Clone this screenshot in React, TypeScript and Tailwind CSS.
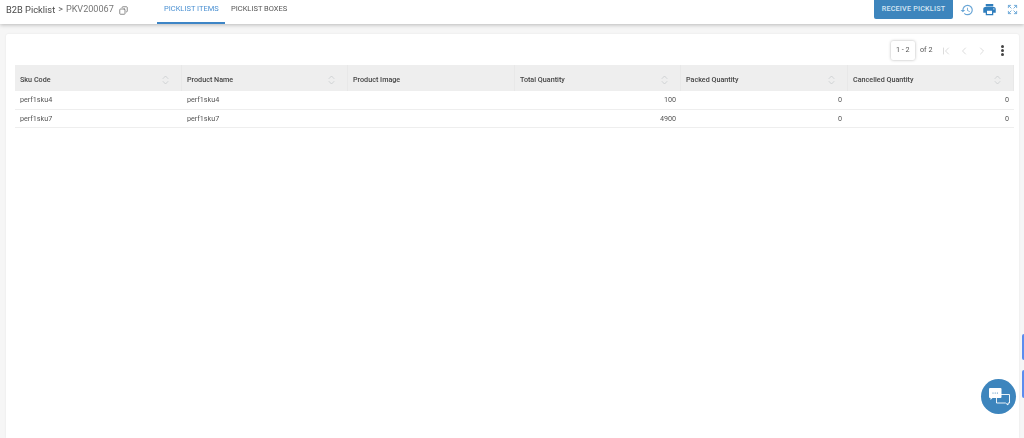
import React from 'react';
import { Copy, ChevronFirst, ChevronLeft, ChevronRight, Expand } from 'lucide-react';
import { MdHistory, MdPrint } from 'react-icons/md';

const columns = [
    { label: 'Sku Code', sortable: true },
    { label: 'Product Name', sortable: true },
    { label: 'Product Image', sortable: false },
    { label: 'Total Quantity', sortable: true },
    { label: 'Packed Quantity', sortable: true },
    { label: 'Cancelled Quantity', sortable: true },
];

const rows = [
    ['perf1sku4', 'perf1sku4', '', '100', '0', '0'],
    ['perf1sku7', 'perf1sku7', '', '4900', '0', '0'],
];

const SortIcon: React.FC = () => (
    <svg width="7" height="10" viewBox="0 0 7 10" fill="none" stroke="#c8cbce" strokeWidth="0.8">
        <path d="M0.8 3.8 L3.5 1 L6.2 3.8" />
        <path d="M0.8 6.2 L3.5 9 L6.2 6.2" />
    </svg>
);

const ChatIcon: React.FC = () => (
    <svg width="21" height="18" viewBox="0 0 21 18" className="ml-[1px]">
        <path d="M7.5 6.5h13v8.500h-1.500v2l-2.500-2H7.500z" fill="none" stroke="#fff" strokeWidth="0.9" />
        <path d="M1 0h10.500a1 1 0 0 1 1 1v8a1 1 0 0 1-1 1H3.500L1.500 12v-2H1a1 1 0 0 1-1-1V1a1 1 0 0 1 1-1z" fill="#fff" />
        <circle cx="4" cy="5" r="0.6" fill="#3d85bd" />
        <circle cx="6.200" cy="5" r="0.6" fill="#3d85bd" />
        <circle cx="8.400" cy="5" r="0.6" fill="#3d85bd" />
    </svg>
);

export default function App() {
    return (
        <div className="relative h-[438px] w-[1024px] overflow-hidden bg-[#f6f6f6] font-['Roboto',sans-serif]">
            <header className="flex h-[24px] items-start bg-white pl-[6px] pr-[6px] shadow-[0_1px_4px_rgba(0,0,0,0.25)]">
                <div className="flex h-[19px] w-[151px] items-center leading-none will-change-transform">
                    <span className="text-[9.300px] text-[#4a4a4a]">B2B Picklist</span>
                    <span className="mx-[3px] text-[9px] text-[#666]">&gt;</span>
                    <span className="text-[9.100px] text-[#777]">PKV200067</span>
                    <Copy className="ml-[5px] mt-[1px] h-[9px] w-[9px] -scale-x-100 text-[#666]" />
                </div>
                <div className="flex h-full text-[7.500px] leading-none">
                    <div className="flex h-full w-[68px] items-center justify-center border-b-2 border-[#3d85c6] pb-[4px] text-[#4a90d2]">
                        <span className="will-change-transform">PICKLIST ITEMS</span>
                    </div>
                    <div className="flex h-full w-[68px] items-center justify-center whitespace-nowrap border-b-2 border-transparent pb-[4px] text-[#555]">
                        <span className="will-change-transform">PICKLIST BOXES</span>
                    </div>
                </div>
                <div className="ml-auto flex items-center">
                    <button className="h-[19px] w-[79px] rounded-b-[2px] bg-[#3d85bd] text-[7.200px] font-medium tracking-[0.2px] text-[#d5e5f2]">RECEIVE PICKLIST</button>
                    <MdHistory className="ml-[7px] h-[14px] w-[14px] text-[#6aa6d6]" />
                    <MdPrint className="ml-[8px] h-[15px] w-[15px] text-[#2f7ebd]" />
                    <Expand className="ml-[10px] h-[11px] w-[11px] text-[#6aa6d6]" />
                </div>
            </header>

            <main className="ml-[6px] mr-[5px] mt-[10px] h-[404px] rounded-t-[2px] bg-white pl-[9px] pr-[5px] shadow-[0_0_2px_rgba(0,0,0,0.08)]">
                <div className="flex h-[31px] items-center justify-end pr-[10px] pt-[2px]">
                    <div className="flex h-[19px] w-[24px] items-center justify-center rounded-[2px] bg-white text-[7.200px] text-[#555] shadow-[0_0_3px_rgba(0,0,0,0.3)]">
                        <span className="will-change-transform">1 - 2</span>
                    </div>
                    <span className="ml-[5px] text-[7.200px] text-[#555] will-change-transform">of 2</span>
                    <ChevronFirst className="ml-[8px] h-[12px] w-[12px] text-[#dcdcdc]" />
                    <ChevronLeft className="ml-[6px] h-[12px] w-[12px] text-[#dcdcdc]" />
                    <ChevronRight className="ml-[6px] h-[12px] w-[12px] text-[#dcdcdc]" />
                    <div className="ml-[13px] flex w-[3px] flex-col gap-[1.500px]">
                        <span className="h-[2.500px] w-[2.500px] rounded-full bg-[#444]" />
                        <span className="h-[2.500px] w-[2.500px] rounded-full bg-[#444]" />
                        <span className="h-[2.500px] w-[2.500px] rounded-full bg-[#444]" />
                    </div>
                </div>

                <div className="grid grid-cols-6 text-[7.200px]">
                    {columns.map(col => (
                        <div key={col.label} className="flex h-[26px] items-center justify-between border-r border-[#e8e8e8] bg-[#eeeeee] pl-[5px] pr-[12px] pt-[4px] font-medium text-[#444] last:border-r-0">
                            <span className="will-change-transform">{col.label}</span>
                            {col.sortable && <SortIcon />}
                        </div>
                    ))}
                    {rows.map((row, i) =>
                        row.map((cell, j) => (
                            <div key={`${i}-${j}`} className={`flex h-[18.500px] items-center border-b border-[#eeeeee] px-[5px] text-[#555] ${i === 1 ? 'pt-[1.500px]' : 'pt-[0.5px]'} ${j > 2 ? 'justify-end' : ''}`}>
                                <span className="will-change-transform">{cell}</span>
                            </div>
                        ))
                    )}
                </div>
            </main>

            <div className="absolute right-0 top-[334px] h-[26px] w-[2px] rounded-l-[2px] bg-[#5b8def]" />
            <div className="absolute right-0 top-[370px] h-[28px] w-[2px] rounded-l-[2px] bg-[#5b8def]" />
            <button className="absolute left-[981px] top-[379px] flex h-[35px] w-[35px] items-center justify-center rounded-full bg-[#3d85bd]">
                <ChatIcon />
            </button>
        </div>
    );
}
